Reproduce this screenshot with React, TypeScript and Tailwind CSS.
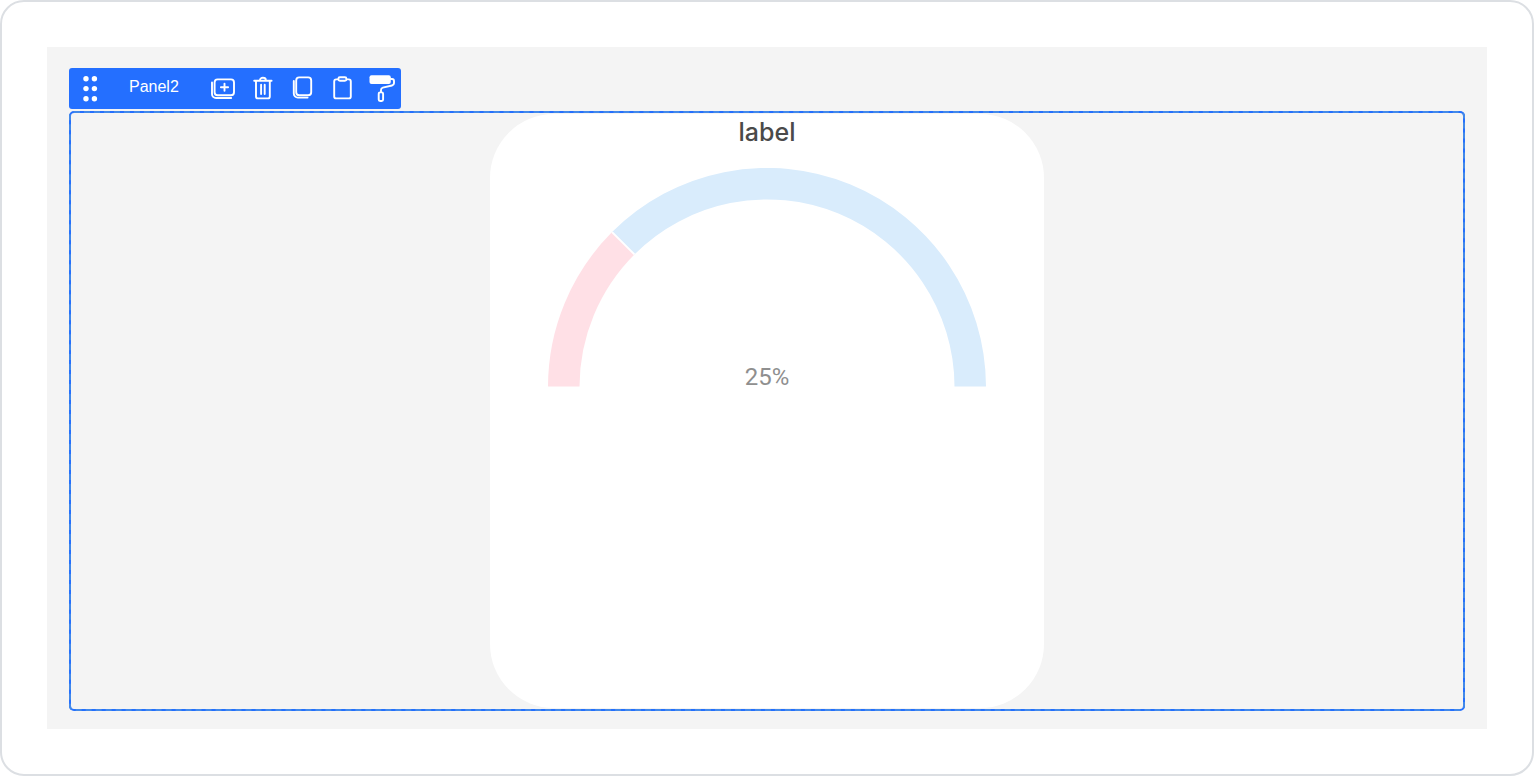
import type { ReactNode } from "react";

const strokeProps = {
  fill: "none",
  stroke: "currentColor",
  strokeWidth: 1.9,
  strokeLinecap: "round",
  strokeLinejoin: "round",
} as const;

function ToolButton({ label, children }: { label: string; children: ReactNode }) {
  return (
    <button type="button" aria-label={label} className="size-10 cursor-pointer">
      <svg viewBox="0 0 40 40" className="size-10" aria-hidden="true" {...strokeProps}>
        {children}
      </svg>
    </button>
  );
}

function Toolbar() {
  return (
    <div className="flex h-[41px] w-fit items-start rounded-[3px] bg-[#246fff] pr-px text-white">
      <button type="button" aria-label="Move" className="h-10 w-[42px] cursor-move">
        <svg viewBox="0 0 42 40" className="h-10 w-[42px]" fill="currentColor" aria-hidden="true">
          {[10.8, 20.6, 30.8].map((y) => (
            <g key={y}>
              <circle cx="17" cy={y} r="2.7" />
              <circle cx="25.4" cy={y} r="2.7" />
            </g>
          ))}
        </svg>
      </button>
      <span className="w-[89px] pl-[18px] text-base leading-[38px]">Panel2</span>
      <ToolButton label="Add">
        <rect x="14.6" y="11.4" width="19.4" height="15.8" rx="3" />
        <path d="M12 14.4v11.6a4 4 0 0 0 4 4h15.2M24.5 15.6v7.2M20.9 19.2h7.2" />
      </ToolButton>
      <ToolButton label="Delete">
        <path d="M14.2 12.8h17.4M16 13v15.4a2 2 0 0 0 2 2h9.8a2 2 0 0 0 2-2V13M20 12.4v-.4a2.9 2.3 0 0 1 5.8 0v.4M21.1 16.8v9.2M24.7 16.8v9.2" />
      </ToolButton>
      <ToolButton label="Copy">
        <rect x="16.2" y="9.4" width="15" height="17.8" rx="3" />
        <path d="M13.8 13v12.6a4 4 0 0 0 4 4h9.8" />
      </ToolButton>
      <ToolButton label="Paste">
        <path d="M18 11.4h-1.8a2 2 0 0 0-2 2v15a2 2 0 0 0 2 2h12.6a2 2 0 0 0 2-2v-15a2 2 0 0 0-2-2H27" />
        <rect x="18.4" y="9.3" width="8" height="3.4" rx="1.5" />
      </ToolButton>
      <ToolButton label="Format">
        <rect x="9.5" y="7.3" width="21.3" height="8.7" rx="2" fill="currentColor" stroke="none" />
        <path d="M30.8 11H32a2 2 0 0 1 2 2v2.1a2.6 2.6 0 0 1-2 2.4l-9.2 2.2a2.4 2.4 0 0 0-1.8 2.4v1.7" />
        <rect x="18.7" y="24.4" width="4.4" height="8.6" rx="1.4" />
      </ToolButton>
    </div>
  );
}

function Gauge({ value }: { value: number }) {
  return (
    <div className="relative w-[438px] max-w-full">
      <svg viewBox="0 0 438 219" className="block w-full" role="img" aria-label={`${value}%`}>
        <path
          d="M0 218.4A219 219 0 0 1 64.1 64.1L86.4 86.4A187.5 187.5 0 0 0 31.5 218.4Z"
          fill="#ffe0e6"
        />
        <path
          d="M64.1 64.1A219 219 0 0 1 438 218.4H406.5A187.5 187.5 0 0 0 86.4 86.4Z"
          fill="#d9ecfc"
        />
        <path d="M64.1 64.1L86.4 86.4" stroke="#fff" strokeWidth="2" />
      </svg>
      <p className="absolute inset-x-0 -bottom-1 text-center font-['Roboto',sans-serif] text-2xl leading-7 text-[#8f8f8f]">
        {value}%
      </p>
    </div>
  );
}

export default function App() {
  return (
    <main className="min-h-screen rounded-3xl border-2 border-[#dcdfe3] bg-white p-[45px] font-['Liberation_Sans',sans-serif]">
      <div className="bg-[#f4f4f4] px-[22px] pt-[21px] pb-[18px]">
        <Toolbar />
        <section className="mt-0.5 rounded-[5px] border-2 border-[#246fff] p-px outline-2 -outline-offset-2 outline-dashed outline-[#4389e8]">
          <div className="mx-auto flex min-h-[594px] max-w-[554px] flex-col items-center rounded-[64px] bg-white font-['Inter',sans-serif]">
            <h2 className="text-[25px] leading-9 font-medium text-[#4a4a4a]">label</h2>
            <div className="mt-[18px] flex w-full justify-center">
              <Gauge value={25} />
            </div>
          </div>
        </section>
      </div>
    </main>
  );
}
